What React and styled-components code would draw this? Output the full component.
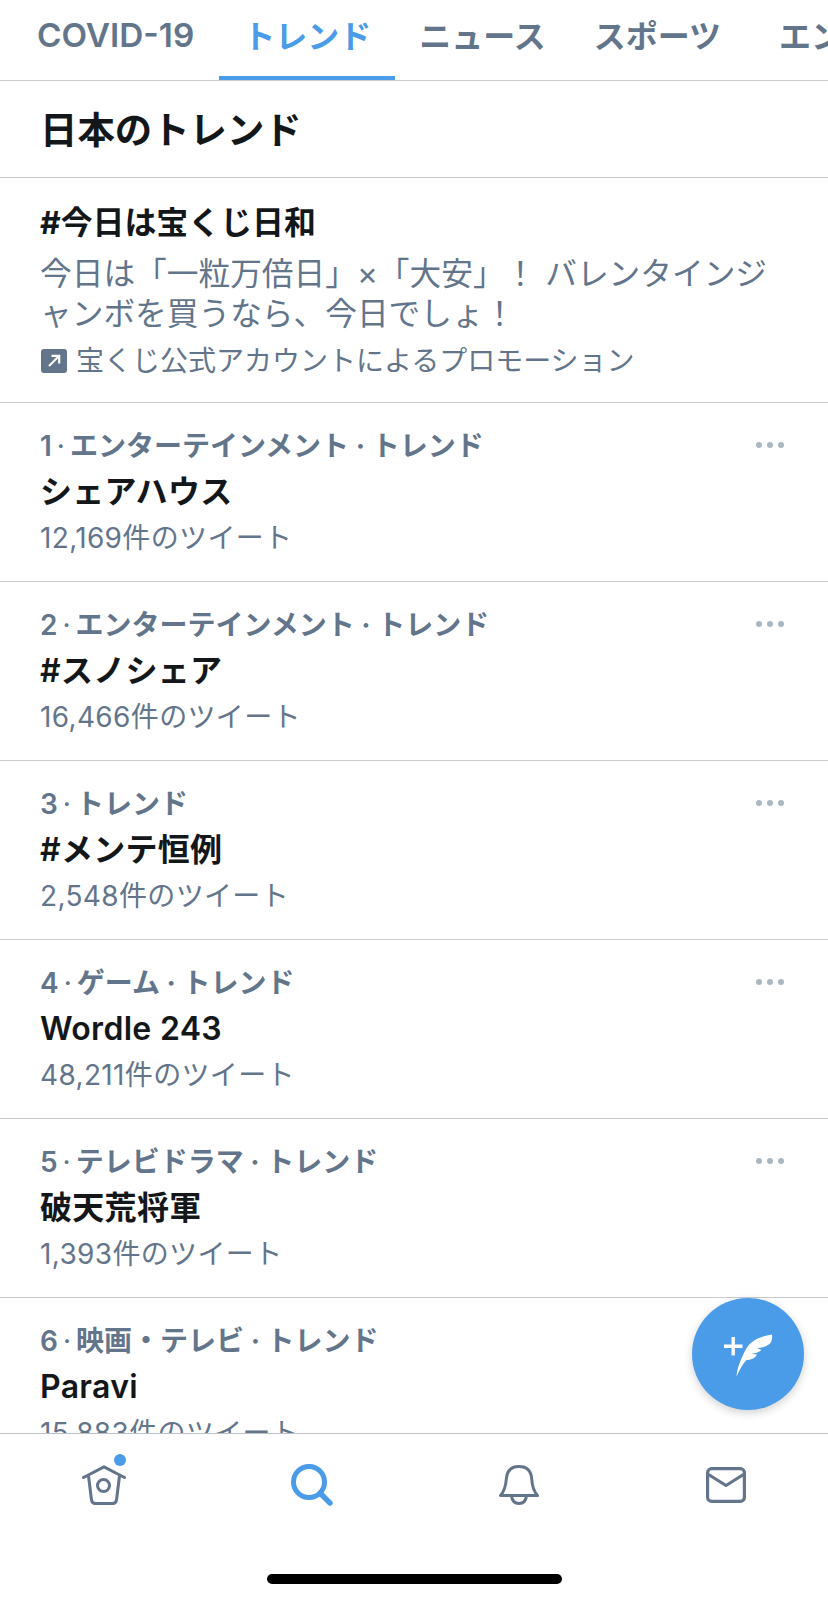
import styled, { createGlobalStyle } from "styled-components";

const GlobalStyle = createGlobalStyle`
  html, body {
    margin: 0;
    padding: 0;
    background: #fff;
  }
  * {
    box-sizing: border-box;
  }
`;

const trends = [
  { rank: 1, category: "エンターテインメント · トレンド", title: "シェアハウス", count: "12,169件のツイート" },
  { rank: 2, category: "エンターテインメント · トレンド", title: "#スノシェア", count: "16,466件のツイート" },
  { rank: 3, category: "トレンド", title: "#メンテ恒例", count: "2,548件のツイート" },
  { rank: 4, category: "ゲーム · トレンド", title: "Wordle 243", count: "48,211件のツイート" },
  { rank: 5, category: "テレビドラマ · トレンド", title: "破天荒将軍", count: "1,393件のツイート" },
  { rank: 6, category: "映画・テレビ · トレンド", title: "Paravi", count: "15,883件のツイート", noMenu: true },
];

const tabs = ["COVID-19", "トレンド", "ニュース", "スポーツ", "エンターテインメント"];

function HomeIcon() {
  return (
    <svg width="44" height="40" viewBox="1 0 44 40" overflow="visible" fill="none" stroke="#63758b" strokeWidth="3" strokeLinecap="round" strokeLinejoin="round">
      <path d="M1.5 12.5 L22 1.8 L42.5 12.5" />
      <path d="M6.5 11 L9.5 35 Q10 38.4 13.2 38.4 L30.8 38.4 Q34 38.4 34.5 35 L37.5 11" />
      <circle cx="21.5" cy="20.5" r="6" />
    </svg>
  );
}

function SearchIcon() {
  return (
    <svg width="42" height="42" viewBox="0 0 42 42" fill="none" stroke="#4a9be8" strokeLinecap="round">
      <circle cx="18" cy="18" r="15.5" strokeWidth="5" />
      <path d="M29.5 29.5 L39 39" strokeWidth="5.4" />
    </svg>
  );
}

function BellIcon() {
  return (
    <svg width="40" height="40" viewBox="0 0 40 40" fill="none" stroke="#63758b" strokeWidth="3" strokeLinecap="round" strokeLinejoin="round">
      <path d="M1.5 30.5 L38.5 30.5 Q33.5 25 32.7 14 Q31.8 1.5 20 1.5 Q8.2 1.5 7.3 14 Q6.5 25 1.5 30.5 Z" />
      <path d="M12.5 31 Q13.5 38.5 20 38.5 Q26.5 38.5 27.5 31" />
    </svg>
  );
}

function MailIcon() {
  return (
    <svg width="40" height="36" viewBox="0 0 40 36" fill="none" stroke="#63758b" strokeWidth="3.2" strokeLinecap="round" strokeLinejoin="round">
      <rect x="1.6" y="1.6" width="36.8" height="32.8" rx="4" />
      <path d="M2.5 7.5 L20 18.5 L37.5 7.5" />
    </svg>
  );
}

function ComposeIcon() {
  return (
    <svg width="50" height="46" viewBox="0 0 50 46" fill="#fff">
      <path d="M8.5 6 h3.4 v7.5 h7.6 v3.4 h-7.6 v7.6 h-3.4 v-7.6 H1 v-3.4 h7.5 Z" />
      <path d="M49 3.5 C38 5 28 9 23 18 C18.5 26.5 14 37 13.5 45.5 C17 38 20 32.5 23.5 29 C29 29 32.5 26.5 34 23.5 L28.5 22.5 C32 22.5 36 21.5 38.5 19 L34 17 C39 17 44.5 15.5 47.5 12 C49 9.5 49.5 6.5 49 3.5 Z" />
    </svg>
  );
}

function PromotedIcon() {
  return (
    <svg width="26" height="24" viewBox="0 0 26 24">
      <rect width="26" height="24" rx="3" fill="#63758b" />
      <path d="M8 17 L18 7 M10.5 6.8 L18.2 6.8 L18.2 14.5" fill="none" stroke="#fff" strokeWidth="2.2" />
    </svg>
  );
}

export default function App() {
  return (
    <>
      <GlobalStyle />
      <Page>
        <Tabs>
          {tabs.map((tab) => (
            <Tab key={tab} $active={tab === "トレンド"} $latin={tab === "COVID-19"}>{tab}</Tab>
          ))}
        </Tabs>

        <List>
          <Heading>日本のトレンド</Heading>

          <Promo>
            <PromoTitle>#今日は宝くじ日和</PromoTitle>
            <PromoText>今日は「一粒万倍日」×「大安」！ バレンタインジ<br />ャンボを買うなら、今日でしょ！</PromoText>
            <PromoBy>
              <PromotedIcon />
              宝くじ公式アカウントによるプロモーション
            </PromoBy>
          </Promo>

          {trends.map((trend) => (
            <Row key={trend.rank}>
              <MetaLine>
                <Meta><Rank>{trend.rank}</Rank><RankDot>·</RankDot>{trend.category}</Meta>
                {!trend.noMenu && <Dots><i /><i /><i /></Dots>}
              </MetaLine>
              <Title>{trend.title}</Title>
              <Count>{trend.count}</Count>
            </Row>
          ))}
        </List>

        <BottomBar>
          <NavIcons>
            <NavItem>
              <HomeIcon />
              <Badge />
            </NavItem>
            <NavItem><SearchIcon /></NavItem>
            <NavItem><BellIcon /></NavItem>
            <NavItem><MailIcon /></NavItem>
          </NavIcons>
          <HomeBar />
        </BottomBar>

        <Fab><ComposeIcon /></Fab>
      </Page>
    </>
  );
}

const Page = styled.div`
  position: relative;
  width: 828px;
  height: 1600px;
  overflow: hidden;
  display: flex;
  flex-direction: column;
  background: #fff;
  font-family: "Inter", "Noto Sans CJK JP", sans-serif;
  color: #14171a;
`;

const Tabs = styled.nav`
  flex: none;
  height: 81px;
  padding-left: 11px;
  display: flex;
  border-bottom: 1px solid #c8ccd0;
  overflow: hidden;
`;

const Tab = styled.div`
  flex: none;
  height: 80px;
  padding: ${(p) => (p.$latin ? "0 25px 7px 26px" : "0 24px 9px")};
  display: flex;
  align-items: center;
  font-size: ${(p) => (p.$latin ? "33.3px" : "32px")};
  font-weight: ${(p) => (p.$latin ? 600 : 700)};
  color: ${(p) => (p.$active ? "#4a9be8" : "#63758b")};
  border-bottom: 4px solid ${(p) => (p.$active ? "#4a9be8" : "transparent")};

  &:last-child {
    margin-left: 10px;
  }
`;

const List = styled.main`
  flex: 1;
  min-height: 0;
  overflow: hidden;
`;

const Heading = styled.h1`
  margin: 0;
  height: 97px;
  padding: 0 0 2px 40px;
  display: flex;
  align-items: center;
  font-size: 37.4px;
  font-weight: 700;
  border-bottom: 1px solid #c8ccd0;
`;

const Promo = styled.section`
  height: 225px;
  padding: 21px 40px 0;
  border-bottom: 1px solid #c8ccd0;
`;

const PromoTitle = styled.div`
  font-size: 31.9px;
  font-weight: 700;
  line-height: 48px;
`;

const PromoText = styled.p`
  margin: 7px 0 0;
  font-size: 31.7px;
  line-height: 40px;
  color: #63758b;
  white-space: nowrap;
`;

const PromoBy = styled.div`
  margin-top: 7px;
  padding-left: 1px;
  display: flex;
  align-items: center;
  gap: 9px;
  font-size: 28px;
  line-height: 40px;
  color: #63758b;
  white-space: nowrap;
`;

const Row = styled.article`
  height: 179px;
  padding: 20px 44px 0 40px;
  border-bottom: 1px solid #c8ccd0;
`;

const MetaLine = styled.div`
  display: flex;
  justify-content: space-between;
  height: 46px;
`;

const Meta = styled.div`
  font-size: 28px;
  font-weight: 700;
  line-height: 46px;
  color: #63758b;
`;

const Rank = styled.span`
  font-weight: 600;
`;

const RankDot = styled.span`
  margin: 0 5px;
  font-weight: 400;
`;

const Dots = styled.div`
  display: flex;
  align-items: center;
  gap: 5px;
  height: 46px;
  margin-top: -1px;

  i {
    width: 6px;
    height: 6px;
    border-radius: 50%;
    background: #aab8c2;
  }
`;

const Title = styled.div`
  font-size: 32px;
  font-weight: 600;
  line-height: 46px;
  letter-spacing: 0.3px;
`;

const Count = styled.div`
  font-size: 28px;
  line-height: 47px;
  letter-spacing: 0.35px;
  color: #63758b;
`;

const BottomBar = styled.footer`
  flex: none;
  height: 167px;
  background: #fff;
  border-top: 1px solid #bcc1c6;
  display: flex;
  flex-direction: column;
  align-items: center;
`;

const NavIcons = styled.div`
  width: 100%;
  height: 140px;
  padding: 29px 0 0 1.5px;
  display: grid;
  grid-template-columns: repeat(4, 207px);
`;

const NavItem = styled.div`
  position: relative;
  height: 44px;
  display: flex;
  align-items: center;
  justify-content: center;
`;

const Badge = styled.span`
  position: absolute;
  left: 112.5px;
  top: -9px;
  width: 12px;
  height: 12px;
  border-radius: 50%;
  background: #4a9be8;
`;

const HomeBar = styled.div`
  width: 295px;
  height: 10px;
  border-radius: 5px;
  background: #000;
`;

const Fab = styled.button`
  position: absolute;
  left: 692px;
  top: 1298px;
  width: 112px;
  height: 112px;
  padding: 0;
  border: 0;
  border-radius: 50%;
  background: #4a9be8;
  box-shadow: 0 3px 8px rgba(20, 23, 26, 0.2);
  display: flex;
  align-items: center;
  justify-content: center;
`;
